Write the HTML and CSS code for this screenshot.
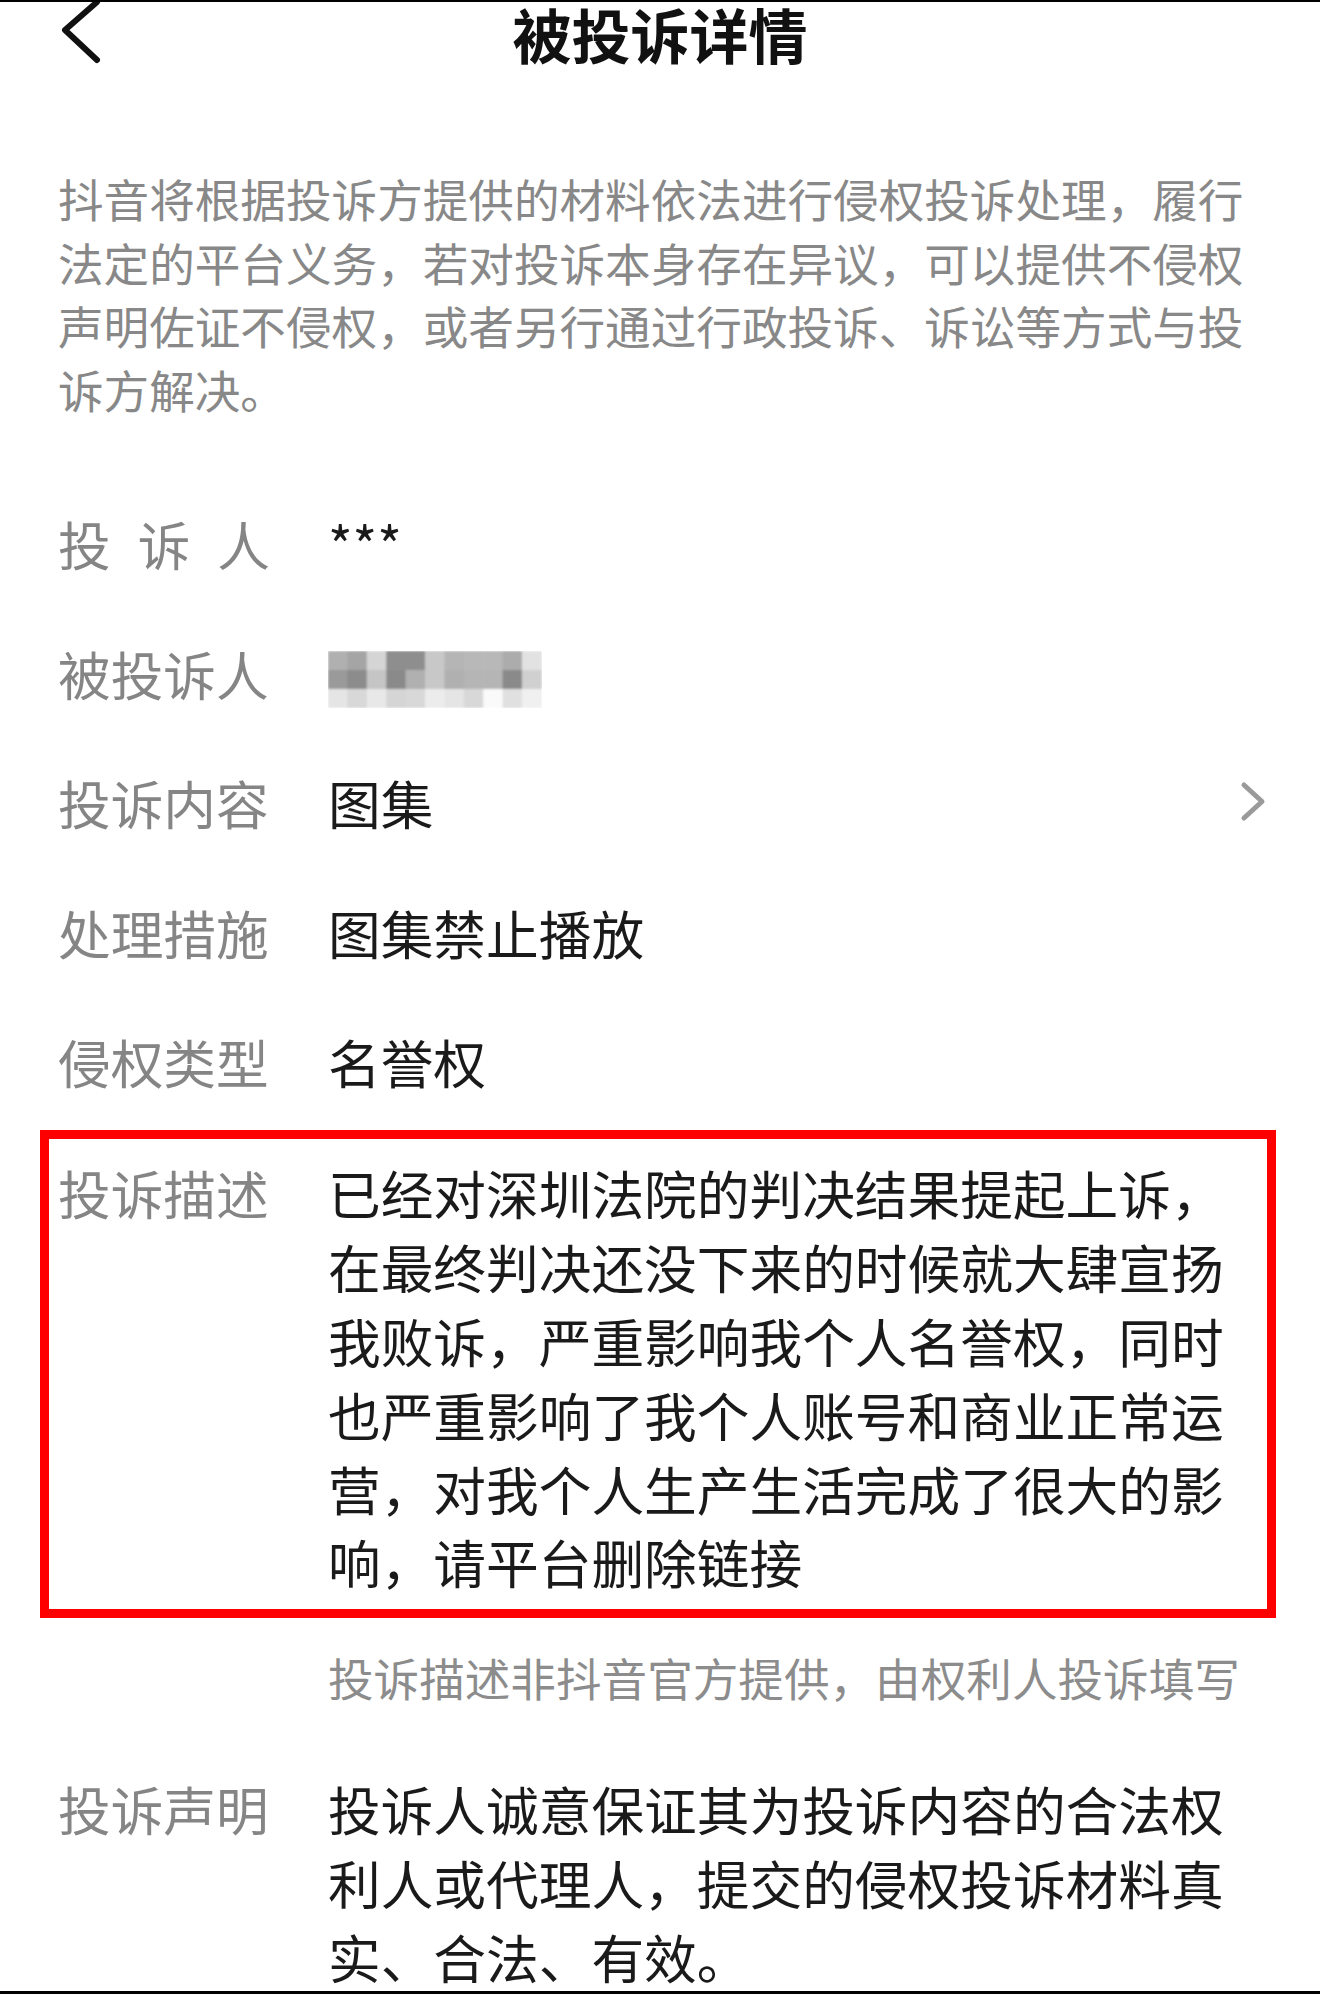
FILE: index.html
```html
<!DOCTYPE html>
<html lang="zh-CN">
<head>
<meta charset="utf-8">
<title>被投诉详情</title>
<link rel="stylesheet" href="styles.css">
</head>
<body>
<div class="page">
  <header class="header">
    <svg class="back" width="44" height="64" viewBox="0 0 44 64" aria-hidden="true">
      <polyline points="39,0 7,28 39,58" fill="none" stroke="#111" stroke-width="6" stroke-linecap="round" stroke-linejoin="round"/>
    </svg>
    <h1 class="title">被投诉详情</h1>
    <div></div>
  </header>

  <p class="intro">抖音将根据投诉方提供的材料依法进行侵权投诉处理，履行法定的平台义务，若对投诉本身存在异议，可以提供不侵权声明佐证不侵权，或者另行通过行政投诉、诉讼等方式与投诉方解决。</p>

  <div class="rows">
    <div class="row">
      <div class="label"><span class="spread">投诉人</span></div>
      <div class="value">***</div>
    </div>
    <div class="row">
      <div class="label">被投诉人</div>
      <div class="value">
        <svg class="mosaic" width="214" height="57" viewBox="0 0 214 57" aria-hidden="true">
          <defs><filter id="soft" x="-5%" y="-10%" width="110%" height="120%"><feGaussianBlur stdDeviation="1.3"/></filter></defs>
          <g filter="url(#soft)">
            <rect x="0" y="0" width="20" height="19" fill="#b0b0b0"/>
            <rect x="19.4" y="0" width="20" height="19" fill="#a5a5a5"/>
            <rect x="38.8" y="0" width="20" height="19" fill="#d5d5d5"/>
            <rect x="58.2" y="0" width="20" height="19" fill="#8e8e8e"/>
            <rect x="77.6" y="0" width="20" height="19" fill="#8e8e8e"/>
            <rect x="97" y="0" width="20" height="19" fill="#c8c8c8"/>
            <rect x="116.4" y="0" width="20" height="19" fill="#b5b5b5"/>
            <rect x="135.8" y="0" width="20" height="19" fill="#b8b8b8"/>
            <rect x="155.2" y="0" width="20" height="19" fill="#b8b8b8"/>
            <rect x="174.6" y="0" width="20" height="19" fill="#acacac"/>
            <rect x="194" y="0" width="20" height="19" fill="#e2e2e2"/>

            <rect x="0" y="19" width="20" height="19" fill="#9a9a9a"/>
            <rect x="19.4" y="19" width="20" height="19" fill="#8c8c8c"/>
            <rect x="38.8" y="19" width="20" height="19" fill="#c5c5c5"/>
            <rect x="58.2" y="19" width="20" height="19" fill="#8a8a8a"/>
            <rect x="77.6" y="19" width="20" height="19" fill="#b0b0b0"/>
            <rect x="97" y="19" width="20" height="19" fill="#c8c8c8"/>
            <rect x="116.4" y="19" width="20" height="19" fill="#b0b0b0"/>
            <rect x="135.8" y="19" width="20" height="19" fill="#b5b5b5"/>
            <rect x="155.2" y="19" width="20" height="19" fill="#b5b5b5"/>
            <rect x="174.6" y="19" width="20" height="19" fill="#8a8a8a"/>
            <rect x="194" y="19" width="20" height="19" fill="#d0d0d0"/>

            <rect x="0" y="38" width="20" height="19" fill="#e5e5e5"/>
            <rect x="19.4" y="38" width="20" height="19" fill="#d8d8d8"/>
            <rect x="38.8" y="38" width="20" height="19" fill="#e8e8e8"/>
            <rect x="58.2" y="38" width="20" height="19" fill="#d5d5d5"/>
            <rect x="77.6" y="38" width="20" height="19" fill="#d8d8d8"/>
            <rect x="97" y="38" width="20" height="19" fill="#ececec"/>
            <rect x="116.4" y="38" width="20" height="19" fill="#e5e5e5"/>
            <rect x="135.8" y="38" width="20" height="19" fill="#d8d8d8"/>
            <rect x="155.2" y="38" width="20" height="19" fill="#fafafa"/>
            <rect x="174.6" y="38" width="20" height="19" fill="#e0e0e0"/>
            <rect x="194" y="38" width="20" height="19" fill="#f0f0f0"/>
          </g>
        </svg>
      </div>
    </div>
    <div class="row">
      <div class="label">投诉内容</div>
      <div class="value value-link">
        <span>图集</span>
        <svg class="chev" width="26" height="44" viewBox="0 0 26 44" aria-hidden="true">
          <polyline points="6,4 24,20.5 6,37" fill="none" stroke="#9a9a9a" stroke-width="5" stroke-linecap="round" stroke-linejoin="round"/>
        </svg>
      </div>
    </div>
    <div class="row">
      <div class="label">处理措施</div>
      <div class="value">图集禁止播放</div>
    </div>
    <div class="row">
      <div class="label">侵权类型</div>
      <div class="value">名誉权</div>
    </div>
  </div>

  <div class="desc-box">
    <div class="row">
      <div class="label">投诉描述</div>
      <div class="value">已经对深圳法院的判决结果提起上诉，在最终判决还没下来的时候就大肆宣扬我败诉，严重影响我个人名誉权，同时也严重影响了我个人账号和商业正常运营，对我个人生产生活完成了很大的影响，请平台删除链接</div>
    </div>
  </div>

  <p class="note">投诉描述非抖音官方提供，由权利人投诉填写</p>

  <div class="row statement">
    <div class="label">投诉声明</div>
    <div class="value">投诉人诚意保证其为投诉内容的合法权利人或代理人，提交的侵权投诉材料真实、合法、有效。</div>
  </div>
</div>
</body>
</html>
```

FILE: styles.css
```css
html, body {
  margin: 0;
  padding: 0;
  background: #ffffff;
}

body {
  font-family: "Noto Sans CJK SC", "Noto Sans", sans-serif;
}

.page {
  height: 1994px;
  box-sizing: border-box;
  border-top: 2px solid #000;
  border-bottom: 3px solid #000;
  overflow: hidden;
  padding: 0 58px;
  background: #fff;
}

.header {
  height: 64px;
  display: grid;
  grid-template-columns: 1fr auto 1fr;
  align-items: center;
}

.back {
  display: block;
  overflow: visible;
}

.title {
  margin: 0;
  font-size: 59px;
  font-weight: 700;
  line-height: 64px;
  color: #111;
  letter-spacing: 0;
}

.intro {
  margin: 101px 0 0;
  font-size: 45.6px;
  line-height: 63.6px;
  color: #888888;
}

.rows {
  margin-top: 85.6px;
  display: flex;
  flex-direction: column;
  gap: 55.8px;
}

.row {
  display: flex;
  align-items: flex-start;
  font-size: 52.7px;
  line-height: 73.8px;
}

.label {
  flex: none;
  width: 270px;
  color: #858585;
}

.spread {
  display: block;
  width: 212px;
  text-align: justify;
  text-align-last: justify;
}

.value {
  flex: 1;
  min-width: 0;
  color: #1a1a1a;
}

.mosaic {
  display: block;
  margin-top: 14px;
}

.value-link {
  display: flex;
  align-items: center;
}

.chev {
  display: block;
  margin-left: auto;
  margin-right: -2px;
  overflow: visible;
}

.desc-box {
  margin: 31.3px -14px 0 -18px;
  border: 9px solid #ff0000;
  padding: 17px 5px 9.3px 9px;
}

.note {
  margin: 29px 0 0 270px;
  font-size: 45.6px;
  line-height: 60px;
  color: #8c8c8c;
}

.statement {
  margin-top: 65.5px;
}
```
